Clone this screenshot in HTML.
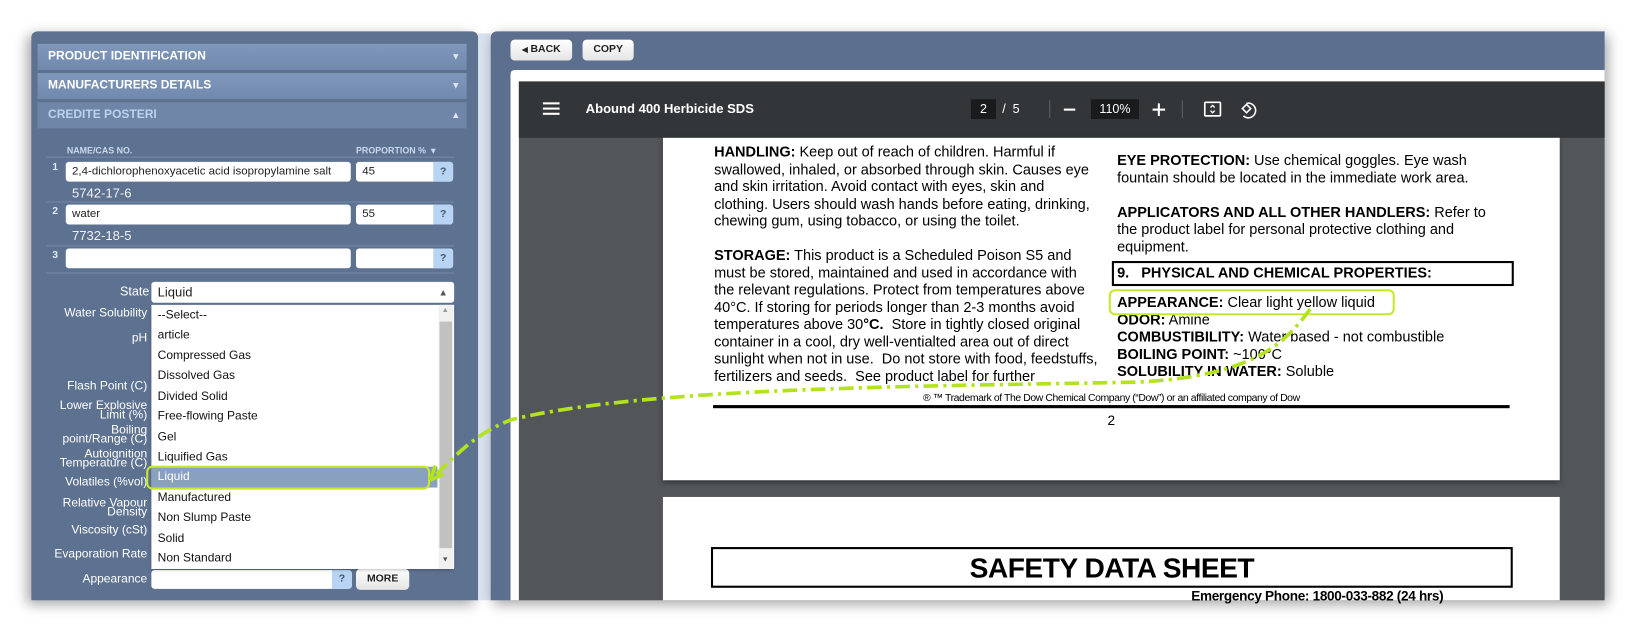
<!DOCTYPE html>
<html><head><meta charset="utf-8"><style>
html,body{margin:0;padding:0;background:#fff;overflow:hidden;width:1637px;height:633px}
#w{position:absolute;left:0;top:0;width:1568px;height:606px;transform:scale(1.044);transform-origin:0 0;font-family:"Liberation Sans",Arial,sans-serif}
.a{position:absolute}
.lp{left:30px;top:30px;width:428px;height:545px;background:#5d7190;border-radius:6px 6px 0 0;box-shadow:-4px 4px 12px rgba(0,0,0,.35)}
.bar{left:36px;width:411px;height:25px;background:linear-gradient(#7f97ba,#7089ad);color:#fff;font-weight:bold;font-size:11.5px;line-height:25px;text-indent:10px}
.bar i{position:absolute;right:6px;top:0;font-style:normal;font-size:9px;color:#dde6f2}
.inp{background:#fff;border-radius:3px;height:19px;font-size:11px;line-height:19px;text-indent:6px;color:#222}
.q{background:#b8d4f5;width:19px;height:19px;font-size:10px;font-weight:bold;color:#456;text-align:center;line-height:19px;border-radius:0 3px 3px 0}
.num{color:#dfe8f5;font-size:10px;font-weight:bold}
.cas{color:#f2f2f2;font-size:12.5px}
.sep{left:44px;width:391px;height:1px;background:#7489a9}
.lbl{right:1427px;color:#fff;font-size:11.5px;text-align:right;line-height:9px;white-space:nowrap}
.it{left:151px;font-size:11.5px;color:#111}
.pdf{font-size:13.9px;color:#000;line-height:16.5px;white-space:nowrap}
.pdf b{font-weight:bold}
.btn{background:linear-gradient(#fff,#e4e4e4);border-radius:4px;font-size:10px;font-weight:bold;height:20px;line-height:20px;text-align:center;color:#222}
</style></head><body><div id="w">
<div class="a lp"></div>
<div class="a bar" style="top:42px">PRODUCT IDENTIFICATION<i>▼</i></div>
<div class="a bar" style="top:70px">MANUFACTURERS DETAILS<i>▼</i></div>
<div class="a bar" style="top:98px;background:#6f86a8;color:#b9d3f0">CREDITE POSTERI<i>▲</i></div>
<div class="a" style="left:64px;top:139px;font-size:8.5px;font-weight:bold;color:#c9d8ee">NAME/CAS NO.</div>
<div class="a" style="left:341px;top:139px;font-size:8.5px;font-weight:bold;color:#c9d8ee">PROPORTION % &nbsp;▾</div>
<div class="a sep" style="top:150px"></div>
<div class="a num" style="left:50px;top:155px">1</div>
<div class="a inp" style="left:63px;top:155px;width:273px">2,4-dichlorophenoxyacetic acid isopropylamine salt</div>
<div class="a inp" style="left:341px;top:155px;width:93px">45</div><div class="a q" style="left:415px;top:155px">?</div>
<div class="a cas" style="left:69px;top:178px">5742-17-6</div>
<div class="a sep" style="top:193px"></div>
<div class="a num" style="left:50px;top:197px">2</div>
<div class="a inp" style="left:63px;top:196px;width:273px">water</div>
<div class="a inp" style="left:341px;top:196px;width:93px">55</div><div class="a q" style="left:415px;top:196px">?</div>
<div class="a cas" style="left:69px;top:219px">7732-18-5</div>
<div class="a sep" style="top:235px"></div>
<div class="a num" style="left:50px;top:239px">3</div>
<div class="a inp" style="left:63px;top:238px;width:273px"></div>
<div class="a inp" style="left:341px;top:238px;width:93px"></div><div class="a q" style="left:415px;top:238px">?</div>
<div class="a sep" style="top:261px"></div>
<div class="a" style="left:115px;top:272px;color:#fff;font-size:12px">State</div>
<div class="a inp" style="left:145px;top:270px;width:290px;height:20px;line-height:20px;font-size:12.5px">Liquid<span style="position:absolute;right:6px;font-size:9px;color:#555">▲</span></div>
<div class="a lbl" style="top:296px">Water Solubility</div>
<div class="a lbl" style="top:320px">pH</div>
<div class="a lbl" style="top:366px">Flash Point (C)</div>
<div class="a lbl" style="top:385px">Lower Explosive<br>Limit (%)</div>
<div class="a lbl" style="top:408px">Boiling<br>point/Range (C)</div>
<div class="a lbl" style="top:431px">Autoignition<br>Temperature (C)</div>
<div class="a lbl" style="top:458px">Volatiles (%vol)</div>
<div class="a lbl" style="top:478px">Relative Vapour<br>Density</div>
<div class="a lbl" style="top:504px">Viscosity (cSt)</div>
<div class="a lbl" style="top:527px">Evaporation Rate</div>
<div class="a lbl" style="top:551px">Appearance</div>
<div class="a inp" style="left:145px;top:546px;width:192px;height:18px"></div>
<div class="a q" style="left:318px;top:546px;height:18px;line-height:18px">?</div>
<div class="a btn" style="left:341px;top:545px;width:51px">MORE</div>
<div class="a" style="left:145px;top:292px;width:290px;height:253px;background:#fff;box-shadow:0 1px 3px rgba(0,0,0,.3)"></div>
<div class="a" style="left:420px;top:292px;width:14px;height:253px;background:#f1f1f1"></div>
<div class="a" style="left:421px;top:308px;width:12px;height:217px;background:#c1c1c1"></div>
<div class="a" style="left:423px;top:294px;font-size:7px;color:#999">▲</div>
<div class="a" style="left:423px;top:533px;font-size:7px;color:#555">▼</div>
<div class="a" style="left:145px;top:447px;width:274px;height:20px;background:#8aa0c0"></div>
<div class="a it" style="top:296px">--Select--</div>
<div class="a it" style="top:315px">article</div>
<div class="a it" style="top:335px">Compressed Gas</div>
<div class="a it" style="top:354px">Dissolved Gas</div>
<div class="a it" style="top:374px">Divided Solid</div>
<div class="a it" style="top:393px">Free-flowing Paste</div>
<div class="a it" style="top:413px">Gel</div>
<div class="a it" style="top:432px">Liquified Gas</div>
<div class="a it" style="top:451px;color:#fff">Liquid</div>
<div class="a it" style="top:471px">Manufactured</div>
<div class="a it" style="top:490px">Non Slump Paste</div>
<div class="a it" style="top:510px">Solid</div>
<div class="a it" style="top:529px">Non Standard</div>
<div class="a" style="left:458px;top:32px;width:12px;height:543px;background:#d8e2ef"></div>
<div class="a" style="left:470px;top:30px;width:1067px;height:545px;background:#5c6f8e;border-radius:6px 0 0 0;box-shadow:3px 4px 12px rgba(0,0,0,.35)"></div>
<div class="a btn" style="left:489px;top:38px;width:59px"><span style="font-size:7px">◀</span> BACK</div>
<div class="a btn" style="left:558px;top:38px;width:49px">COPY</div>
<div class="a" style="left:489px;top:67px;width:1048px;height:508px;background:#fff;border-radius:4px 0 0 0"></div>
<div class="a" style="left:497px;top:78px;width:1040px;height:497px;background:#525659"></div>
<div class="a" style="left:497px;top:78px;width:1040px;height:54px;background:#323639"></div>
<div class="a" style="left:520px;top:98px;width:16px;height:2px;background:#fff;box-shadow:0 5px 0 #fff,0 10px 0 #fff"></div>
<div class="a" style="left:561px;top:97px;color:#fff;font-weight:bold;font-size:12.5px">Abound 400 Herbicide SDS</div>
<div class="a" style="left:930px;top:95px;width:24px;height:19px;background:#191b1c;color:#fff;font-size:12px;text-align:center;line-height:19px">2</div>
<div class="a" style="left:960px;top:97px;color:#fff;font-size:12px">/ &nbsp;5</div>
<div class="a" style="left:1005px;top:96px;width:1px;height:17px;background:#5f6368"></div>
<div class="a" style="left:1019px;top:104px;width:11px;height:2px;background:#fff"></div>
<div class="a" style="left:1045px;top:95px;width:46px;height:19px;background:#191b1c;color:#fff;font-size:12px;text-align:center;line-height:19px">110%</div>
<div class="a" style="left:1104px;top:104px;width:12px;height:2px;background:#fff"></div>
<div class="a" style="left:1109px;top:99px;width:2px;height:12px;background:#fff"></div>
<div class="a" style="left:1132px;top:96px;width:1px;height:17px;background:#5f6368"></div>
<svg class="a" style="left:1152px;top:96px" width="60" height="20" viewBox="0 0 60 20"><rect x="2" y="2" width="15" height="13" rx="1" fill="none" stroke="#fff" stroke-width="1.6"/><path d="M7.5 7l2-2 2 2M7.5 10l2 2 2-2" fill="none" stroke="#fff" stroke-width="1.3"/><path d="M38 8l4-4 4 4-4 4z" fill="none" stroke="#fff" stroke-width="1.5"/><path d="M42 3a7 7 0 1 1-3 12" fill="none" stroke="#fff" stroke-width="1.5"/></svg>
<div class="a" style="left:635px;top:132px;width:859px;height:328px;background:#fff;box-shadow:0 2px 5px rgba(0,0,0,.4)"></div>
<div class="a pdf" style="left:684px;top:137px"><b>HANDLING:</b> Keep out of reach of children. Harmful if<br>swallowed, inhaled, or absorbed through skin. Causes eye<br>and skin irritation. Avoid contact with eyes, skin and<br>clothing. Users should wash hands before eating, drinking,<br>chewing gum, using tobacco, or using the toilet.<br><br><b>STORAGE:</b> This product is a Scheduled Poison S5 and<br>must be stored, maintained and used in accordance with<br>the relevant regulations. Protect from temperatures above<br>40°C. If storing for periods longer than 2-3 months avoid<br>temperatures above 30<b>°C.</b>&nbsp; Store in tightly closed original<br>container in a cool, dry well-ventialted area out of direct<br>sunlight when not in use.&nbsp; Do not store with food, feedstuffs,<br>fertilizers and seeds.&nbsp; See product label for further</div>
<div class="a pdf" style="left:1070px;top:145px"><b>EYE PROTECTION:</b> Use chemical goggles. Eye wash<br>fountain should be located in the immediate work area.<br><br><b>APPLICATORS AND ALL OTHER HANDLERS:</b> Refer to<br>the product label for personal protective clothing and<br>equipment.</div>
<div class="a" style="left:1065px;top:250px;width:381px;height:20px;border:2px solid #000"></div>
<div class="a pdf" style="left:1070px;top:253px"><b>9.&nbsp;&nbsp; PHYSICAL AND CHEMICAL PROPERTIES:</b></div>
<div class="a pdf" style="left:1070px;top:281px"><b>APPEARANCE:</b> Clear light yellow liquid<br><b>ODOR:</b> Amine<br><b>COMBUSTIBILITY:</b> Water based - not combustible<br><b>BOILING POINT:</b> ~100°C<br><b>SOLUBILITY IN WATER:</b> Soluble</div>
<div class="a" style="left:683px;top:376px;width:763px;text-align:center;font-size:10px;letter-spacing:-.4px">® ™ Trademark of The Dow Chemical Company (“Dow”) or an affiliated company of Dow</div>
<div class="a" style="left:683px;top:388px;width:763px;height:3px;background:#000"></div>
<div class="a" style="left:683px;top:395px;width:763px;text-align:center;font-size:13px">2</div>
<div class="a" style="left:635px;top:476px;width:859px;height:99px;background:#fff"></div>
<div class="a" style="left:681px;top:524px;width:764px;height:35px;border:2px solid #000;text-align:center;font-weight:bold;font-size:27px;line-height:36px;letter-spacing:-.5px">SAFETY DATA SHEET</div>
<div class="a" style="left:1141px;top:563px;font-weight:bold;font-size:13px;letter-spacing:-.3px">Emergency Phone: 1800-033-882 (24 hrs)</div>
<div class="a" style="left:1062px;top:277px;width:270px;height:21px;border:2.5px solid #c5ea2b;border-radius:6px"></div>
<div class="a" style="left:140px;top:446px;width:268px;height:19px;border:2.5px solid #c5ea2b;border-radius:6px"></div>
<svg class="a" style="left:0;top:0" width="1560" height="603"><path d="M1255 296 C1230 330 1200 360 1090 366 C900 370 620 370 490 402 C455 415 435 438 416 456" fill="none" stroke="#b2e31c" stroke-width="3.5" stroke-dasharray="14 5 3 5"/><path d="M412 460l5-14m-5 14l13-6" stroke="#b2e31c" stroke-width="3.5" fill="none"/></svg>
</div></body></html>
